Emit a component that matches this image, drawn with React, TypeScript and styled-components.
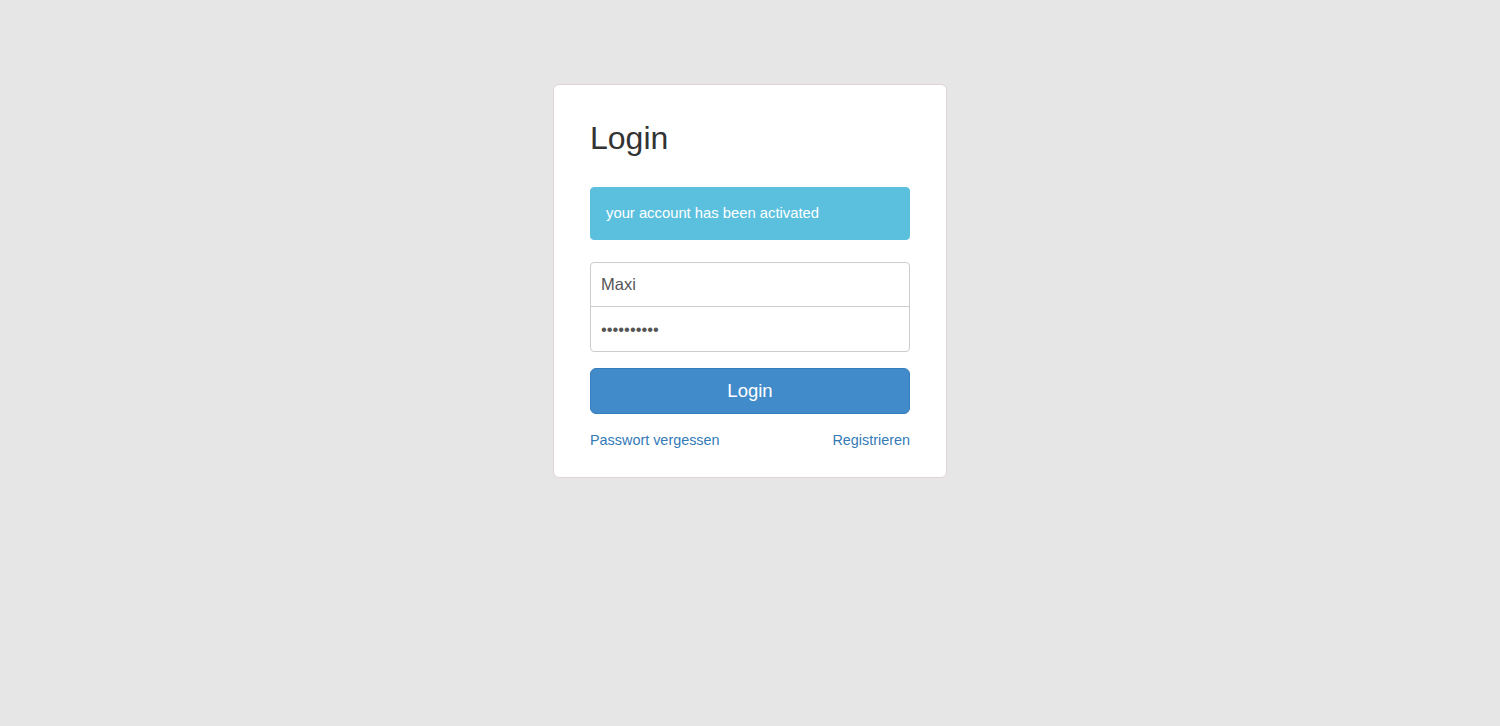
import React from "react";
import styled, { createGlobalStyle } from "styled-components";

const Global = createGlobalStyle`
  html, body { margin: 0; padding: 0; background: #e6e6e6; }
  body { font-family: "Liberation Sans", Arial, Helvetica, sans-serif; color: #333; }
  * { box-sizing: border-box; }
`;

const Page = styled.div`
  min-height: 726px;
  display: flex;
  justify-content: center;
  align-items: flex-start;
  padding-top: 84px;
`;

const Card = styled.form`
  width: 394px;
  background: #fff;
  border: 1px solid #e2d3d5;
  border-radius: 6px;
  padding: 35px 36px 27px;
  display: flex;
  flex-direction: column;
`;

const Title = styled.h2`
  margin: 0 0 31px;
  font-size: 32px;
  line-height: 36px;
  font-weight: 500;
  color: #333;
`;

const Alert = styled.div`
  background: #5bc0de;
  border: 1px solid #5bc0de;
  border-radius: 4px;
  padding: 15px 15px;
  color: #fff;
  font-size: 14.8px;
  line-height: 21px;
  margin-bottom: 22px;
`;

const Input = styled.input<{ $pos: "top" | "bottom" }>`
  display: block;
  width: 100%;
  height: ${(p) => (p.$pos === "top" ? "45px" : "46px")};
  padding: 10px;
  font-family: "Liberation Sans", Arial, Helvetica, sans-serif;
  font-size: 16.5px;
  color: #555;
  background: #fff;
  border: 1px solid #ccc;
  outline: none;
  border-radius: ${(p) => (p.$pos === "top" ? "4px 4px 0 0" : "0 0 4px 4px")};
  margin-top: ${(p) => (p.$pos === "top" ? "0" : "-1px")};
`;

const Button = styled.button`
  margin-top: 16px;
  height: 46px;
  width: 100%;
  background: #428bca;
  border: 1px solid #357ebd;
  border-radius: 6px;
  color: #fff;
  font-family: "Liberation Sans", Arial, Helvetica, sans-serif;
  font-size: 18.5px;
  cursor: pointer;
`;

const Links = styled.div`
  margin-top: 16px;
  display: flex;
  justify-content: space-between;
  font-size: 14.4px;
  line-height: 20px;
`;

const Link = styled.a`
  color: #337ab7;
  text-decoration: none;
`;

export default function App() {
  return (
    <>
      <Global />
      <Page>
        <Card onSubmit={(e) => e.preventDefault()}>
          <Title>Login</Title>
          <Alert>your account has been activated</Alert>
          <Input $pos="top" type="text" defaultValue="Maxi" />
          <Input $pos="bottom" type="password" defaultValue="1234567890" />
          <Button type="submit">Login</Button>
          <Links>
            <Link href="#">Passwort vergessen</Link>
            <Link href="#">Registrieren</Link>
          </Links>
        </Card>
      </Page>
    </>
  );
}
